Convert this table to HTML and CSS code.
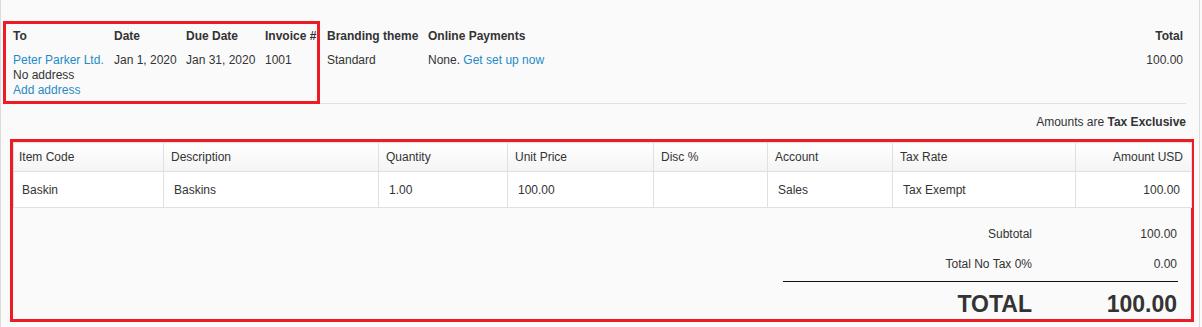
FILE: index.html
```html
<!DOCTYPE html>
<html lang="en">
<head>
<meta charset="utf-8">
<title>Invoice 1001</title>
<link rel="stylesheet" href="styles.css">
</head>
<body>
<div class="page">
  <div class="header">
    <div class="col col-to">
      <div class="lbl">To</div>
      <div class="val">
        <a class="link" href="#">Peter Parker Ltd.</a>
        <div>No address</div>
        <a class="link" href="#">Add address</a>
      </div>
    </div>
    <div class="col col-date">
      <div class="lbl">Date</div>
      <div class="val">Jan 1, 2020</div>
    </div>
    <div class="col col-due">
      <div class="lbl">Due Date</div>
      <div class="val">Jan 31, 2020</div>
    </div>
    <div class="col col-inv">
      <div class="lbl">Invoice #</div>
      <div class="val">1001</div>
    </div>
    <div class="col col-brand">
      <div class="lbl">Branding theme</div>
      <div class="val">Standard</div>
    </div>
    <div class="col col-pay">
      <div class="lbl">Online Payments</div>
      <div class="val">None. <a class="link" href="#">Get set up now</a></div>
    </div>
    <div class="col col-total">
      <div class="lbl">Total</div>
      <div class="val">100.00</div>
    </div>
  </div>

  <div class="amounts">Amounts are <b>Tax Exclusive</b></div>

  <div class="items">
    <table class="lines">
      <colgroup>
        <col class="w-code">
        <col class="w-desc">
        <col class="w-qty">
        <col class="w-price">
        <col class="w-disc">
        <col class="w-acct">
        <col class="w-tax">
        <col class="w-amt">
      </colgroup>
      <thead>
        <tr>
          <th>Item Code</th>
          <th>Description</th>
          <th>Quantity</th>
          <th>Unit Price</th>
          <th>Disc %</th>
          <th>Account</th>
          <th>Tax Rate</th>
          <th class="num">Amount USD</th>
        </tr>
      </thead>
      <tbody>
        <tr>
          <td>Baskin</td>
          <td>Baskins</td>
          <td>1.00</td>
          <td>100.00</td>
          <td></td>
          <td>Sales</td>
          <td>Tax Exempt</td>
          <td class="num">100.00</td>
        </tr>
      </tbody>
    </table>

    <div class="totals">
      <div class="trow">
        <div class="tlbl">Subtotal</div>
        <div class="tval">100.00</div>
      </div>
      <div class="trow">
        <div class="tlbl">Total No Tax 0%</div>
        <div class="tval">0.00</div>
      </div>
      <div class="trow grand">
        <div class="tlbl">TOTAL</div>
        <div class="tval">100.00</div>
      </div>
    </div>
  </div>

  <div class="highlight"></div>
</div>
</body>
</html>
```

FILE: styles.css
```css
html, body {
  margin: 0;
  padding: 0;
}

body {
  background: #fafafa;
  font-family: "Liberation Sans", Arial, sans-serif;
  font-size: 12px;
  color: #333;
}

.page {
  position: relative;
  box-sizing: border-box;
  width: 1200px;
  min-height: 100vh;
  border-left: 1px solid #dcdcdc;
  border-right: 1px solid #dcdcdc;
}

.header {
  display: flex;
  margin: 0 13px 0 12px;
  padding: 28.5px 0 5.5px;
  border-bottom: 1px solid #e0e0e0;
  line-height: 15px;
}

.col {
  display: flex;
  flex-direction: column;
  flex: none;
}

.lbl {
  font-weight: bold;
  margin-bottom: 9px;
}

.col-to { width: 101px; }
.col-date { width: 72px; }
.col-due { width: 79px; }
.col-inv { width: 62px; }
.col-brand { width: 101px; }
.col-pay { width: 200px; }

.col-total {
  margin-left: auto;
  text-align: right;
  padding-right: 3px;
}

.link {
  color: #1f8ac5;
  text-decoration: none;
}

.val .link {
  display: inline;
}

.col-to .val {
  display: flex;
  flex-direction: column;
  align-items: flex-start;
}

.amounts {
  margin: 11px 13px 0 12px;
  text-align: right;
  line-height: 15px;
}

.amounts b {
  font-weight: bold;
}

.items {
  margin: 9px 5px 0 9px;
  border: 3px solid #ed1c24;
}

.lines {
  width: 100%;
  table-layout: fixed;
  border-collapse: collapse;
}

.w-code { width: 150px; }
.w-desc { width: 215px; }
.w-qty { width: 129px; }
.w-price { width: 146px; }
.w-disc { width: 114px; }
.w-acct { width: 125px; }
.w-tax { width: 183px; }
.w-amt { width: 116px; }

.lines th,
.lines td {
  border: 1px solid #e0e0e0;
  text-align: left;
  font-weight: normal;
  white-space: nowrap;
}

.lines th {
  height: 28px;
  padding: 0 8px 0 7px;
  background: linear-gradient(#ffffff, #f4f4f4);
}

.lines th:first-child {
  padding-left: 5px;
}

.lines td {
  height: 35px;
  padding: 0 11px 0 10px;
  background: #ffffff;
}

.lines td:first-child {
  padding-left: 8px;
}

.lines .num {
  text-align: right;
}

.totals {
  width: 395px;
  margin: 11px 13px 0 auto;
  padding-bottom: 2px;
}

.trow {
  display: grid;
  grid-template-columns: 249px 1fr;
  height: 30px;
  line-height: 30px;
}

.tlbl {
  text-align: right;
}

.tval {
  text-align: right;
  padding-right: 1px;
}

.trow.grand {
  margin-top: 2px;
  border-top: 1px solid #111;
  padding-top: 9px;
  height: 26px;
  line-height: 26px;
  font-size: 23px;
  font-weight: bold;
}

.highlight {
  position: absolute;
  left: 2px;
  top: 21px;
  width: 317px;
  height: 83px;
  box-sizing: border-box;
  border: 3px solid #ed1c24;
  pointer-events: none;
}
```
